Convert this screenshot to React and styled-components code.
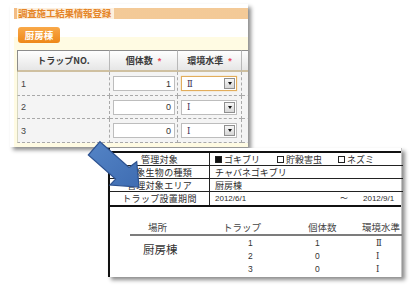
import React from "react";
import styled, { createGlobalStyle } from "styled-components";

const GlobalStyle = createGlobalStyle`
  html, body { margin: 0; padding: 0; background: #fff; }
  body { font-family: "Noto Sans CJK JP", "Liberation Sans", sans-serif; }
  * { box-sizing: border-box; }
`;

const Canvas = styled.div`
  position: relative;
  width: 412px;
  height: 286px;
  overflow: hidden;
  background: #fff;
`;

/* ---------- entry form (top window) ---------- */

const FormWindow = styled.div`
  position: absolute;
  left: 10px;
  top: 4px;
  width: 238px;
  height: 143px;
  background: #fff;
  box-shadow: 3px 3px 4px rgba(0, 0, 0, 0.45);
  overflow: hidden;
  padding: 4px 0 0 4px;
  display: flex;
  flex-direction: column;
`;

const TitleBar = styled.div`
  height: 11px;
  display: flex;
  align-items: center;
  background-color: #fbe2c2;
  background-image: radial-gradient(#f3c996 0.7px, transparent 0.9px);
  background-size: 2px 2px;
  border-left: 3px solid #f3bd85;
`;

const TitleText = styled.span`
  height: 11px;
  padding: 0 3px 0 1px;
  background: #fdf0de;
  font-size: 9.5px;
  line-height: 11px;
  font-weight: bold;
  color: #e58527;
  letter-spacing: -0.2px;
`;

const FormBody = styled.div`
  flex: 1;
  margin-top: 8px;
  padding-left: 3px;
  background: linear-gradient(#fff 0 10px, #fffbe3 10px);
`;

const TabButton = styled.div`
  width: 42px;
  height: 16px;
  margin-left: 1px;
  border-radius: 3px;
  background: linear-gradient(#f9a949, #ee8719);
  color: #fff;
  font-size: 9.5px;
  font-weight: bold;
  display: flex;
  align-items: center;
  justify-content: center;
`;

const Grid = styled.div`
  margin-top: 7px;
  display: grid;
  grid-template-columns: 93px 68px 64px 20px;
  width: 245px;
`;

const HeadCell = styled.div`
  height: 22px;
  display: flex;
  align-items: center;
  justify-content: center;
  gap: 5px;
  background: linear-gradient(#fefefe, #e6e6e6);
  border-top: 1px solid #8c8c8c;
  border-bottom: 2px solid #cfc0a0;
  border-right: 1px solid #b8b8b8;
  border-left: ${(p) => (p.$first ? "1px solid #8c8c8c" : "none")};
  font-size: 9px;
  font-weight: bold;
  color: #3a3a3a;
`;

const Req = styled.span`
  color: #ea4c5a;
  font-family: "Liberation Sans", sans-serif;
  font-size: 9px;
  line-height: 9px;
  padding-top: 2px;
`;

const BodyCell = styled.div`
  height: ${(p) => p.$h}px;
  display: flex;
  align-items: center;
  padding-left: ${(p) => p.$pl || 0}px;
  background: #f4f4f4;
  border-bottom: 1px dashed #a9a9a9;
  border-right: 1px dashed #a9a9a9;
  border-left: ${(p) => (p.$first ? "1px solid #d8d8c0" : "none")};
  font-family: "Liberation Sans", sans-serif;
  font-size: 9px;
  color: #444;
`;

const NumInput = styled.div`
  width: 62px;
  height: 15px;
  background: #fff;
  border: 1px solid #bdbdbd;
  display: flex;
  align-items: center;
  justify-content: flex-end;
  padding-right: 3px;
  font-family: "Liberation Sans", sans-serif;
  font-size: 9px;
  color: #333;
`;

const SelectBox = styled.div`
  width: 56px;
  height: 15px;
  background: #fff;
  border: 1px solid ${(p) => (p.$focus ? "#e2ad5c" : "#bdbdbd")};
  box-shadow: ${(p) => (p.$focus ? "0 0 1px #f0c070" : "none")};
  display: flex;
  align-items: center;
  justify-content: space-between;
  padding: 0 1px 0 5px;
`;

const SelectValue = styled.span`
  font-family: "DejaVu Serif", serif;
  font-size: 8.5px;
  color: #3b2f55;
`;

const DropButton = styled.span`
  width: 11px;
  height: 11px;
  border: 1px solid #8f8f8f;
  background: linear-gradient(#f6f6f6, #d6d6d6);
  display: flex;
  align-items: center;
  justify-content: center;
  &::after {
    content: "";
    border-left: 2.5px solid transparent;
    border-right: 2.5px solid transparent;
    border-top: 3px solid #111;
  }
`;

/* ---------- printed report (bottom window) ---------- */

const ReportWindow = styled.div`
  position: absolute;
  left: 108px;
  top: 148px;
  width: 294px;
  height: 129px;
  background: #fff;
  border-left: 2px solid #111;
  border-right: 1px solid #c4c4c4;
  box-shadow: 3px 3px 4px rgba(0, 0, 0, 0.45);
  padding-top: 3px;
  color: #2b2b2b;
`;

const InfoTable = styled.div`
  display: grid;
  grid-template-columns: 100px 1fr;
  grid-auto-rows: 13px;
  border-top: 2px solid #111;
  border-bottom: 2px solid #111;
`;

const InfoLabel = styled.div`
  display: flex;
  align-items: center;
  justify-content: center;
  border-right: 1px solid #222;
  border-bottom: ${(p) => (p.$last ? "none" : "1px solid #222")};
  font-size: 9px;
  letter-spacing: 0.3px;
  white-space: nowrap;
`;

const InfoValue = styled.div`
  display: flex;
  align-items: center;
  padding-left: 5px;
  border-bottom: ${(p) => (p.$last ? "none" : "1px solid #222")};
  font-size: 9px;
  white-space: nowrap;
`;

const Check = styled.span`
  width: ${(p) => p.$w}px;
  flex: none;
`;

const Box = styled.span`
  display: inline-block;
  width: 7px;
  height: 7px;
  margin-right: 2px;
  vertical-align: -0.5px;
  border: 1px solid #222;
  background: ${(p) => (p.$on ? "#111" : "transparent")};
`;

const DateText = styled.span`
  width: ${(p) => p.$w}px;
  flex: none;
  font-family: "Liberation Sans", sans-serif;
  font-size: 8px;
`;

const Tally = styled.div`
  margin: 13px 0 0 20px;
  display: grid;
  grid-template-columns: 55px 105px 60px 52px;
  grid-template-rows: 16px 13px 13px 13px;
`;

const TallyHead = styled.div`
  display: flex;
  align-items: center;
  justify-content: ${(p) => (p.$center ? "center" : "flex-start")};
  padding-left: ${(p) => p.$pl || 0}px;
  border-bottom: 2px solid #7c7c7c;
  font-size: 9.5px;
  color: #444;
  white-space: nowrap;
`;

const TallyCell = styled.div`
  display: flex;
  align-items: center;
  padding-left: ${(p) => p.$pl}px;
  font-family: ${(p) => (p.$serif ? '"DejaVu Serif", serif' : '"Liberation Sans", sans-serif')};
  font-size: 8.5px;
  color: #333;
`;

const PlaceName = styled.div`
  grid-column: 1;
  grid-row: 2 / span 2;
  display: flex;
  align-items: center;
  padding-left: 13px;
  font-size: 11.5px;
  color: #333;
`;

/* ---------- arrow ---------- */

const ArrowLayer = styled.svg`
  position: absolute;
  left: 0;
  top: 0;
  pointer-events: none;
`;

const rows = [
  { no: "1", count: "1", level: "Ⅱ", h: 24, focus: true },
  { no: "2", count: "0", level: "Ⅰ", h: 23 },
  { no: "3", count: "0", level: "Ⅰ", h: 24 },
];

export default function App() {
  return (
    <>
      <GlobalStyle />
      <Canvas>
        <FormWindow>
          <TitleBar>
            <TitleText>調査施工結果情報登録</TitleText>
          </TitleBar>
          <FormBody>
            <TabButton>厨房棟</TabButton>
            <Grid>
              <HeadCell $first>トラップNO.</HeadCell>
              <HeadCell>
                個体数<Req>*</Req>
              </HeadCell>
              <HeadCell>
                環境水準<Req>*</Req>
              </HeadCell>
              <HeadCell />
              {rows.map((r) => (
                <React.Fragment key={r.no}>
                  <BodyCell $h={r.h} $pl={3} $first>
                    {r.no}
                  </BodyCell>
                  <BodyCell $h={r.h} $pl={3}>
                    <NumInput>{r.count}</NumInput>
                  </BodyCell>
                  <BodyCell $h={r.h} $pl={3}>
                    <SelectBox $focus={r.focus}>
                      <SelectValue>{r.level}</SelectValue>
                      <DropButton />
                    </SelectBox>
                  </BodyCell>
                  <BodyCell $h={r.h} />
                </React.Fragment>
              ))}
            </Grid>
          </FormBody>
        </FormWindow>

        <ReportWindow>
          <InfoTable>
            <InfoLabel>管理対象</InfoLabel>
            <InfoValue>
              <Check $w={62}>
                <Box $on />ゴキブリ
              </Check>
              <Check $w={61}>
                <Box />貯穀害虫
              </Check>
              <Check $w={50}>
                <Box />ネズミ
              </Check>
            </InfoValue>
            <InfoLabel>対象生物の種類</InfoLabel>
            <InfoValue>チャバネゴキブリ</InfoValue>
            <InfoLabel>管理対象エリア</InfoLabel>
            <InfoValue>厨房棟</InfoValue>
            <InfoLabel $last>トラップ設置期間</InfoLabel>
            <InfoValue $last>
              <DateText $w={125}>2012/6/1</DateText>
              <DateText $w={23}>〜</DateText>
              <DateText $w={40}>2012/9/1</DateText>
            </InfoValue>
          </InfoTable>

          <Tally>
            <TallyHead $center>場所</TallyHead>
            <TallyHead $pl={38}>トラップ</TallyHead>
            <TallyHead $pl={18}>個体数</TallyHead>
            <TallyHead $pl={12}>環境水準</TallyHead>
            <PlaceName>厨房棟</PlaceName>
            {rows.map((r, i) => (
              <React.Fragment key={r.no}>
                <TallyCell $pl={63} style={{ gridColumn: 2, gridRow: i + 2 }}>
                  {r.no}
                </TallyCell>
                <TallyCell $pl={25} style={{ gridColumn: 3, gridRow: i + 2 }}>
                  {r.count}
                </TallyCell>
                <TallyCell $pl={26} $serif style={{ gridColumn: 4, gridRow: i + 2 }}>
                  {r.level}
                </TallyCell>
              </React.Fragment>
            ))}
          </Tally>
        </ReportWindow>

        <ArrowLayer width="412" height="286" viewBox="0 0 412 286">
          <defs>
            <linearGradient id="arrowFill" x1="0" y1="0" x2="1" y2="1">
              <stop offset="0" stopColor="#5484c6" />
              <stop offset="1" stopColor="#3f6db2" />
            </linearGradient>
          </defs>
          <polygon
            points="100,141.7 129,167.5 136.7,161.7 139,187 110,185 115.6,179.1 88.3,155"
            fill="url(#arrowFill)"
            stroke="#2d5290"
            strokeWidth="1.2"
            strokeLinejoin="miter"
          />
        </ArrowLayer>
      </Canvas>
    </>
  );
}
